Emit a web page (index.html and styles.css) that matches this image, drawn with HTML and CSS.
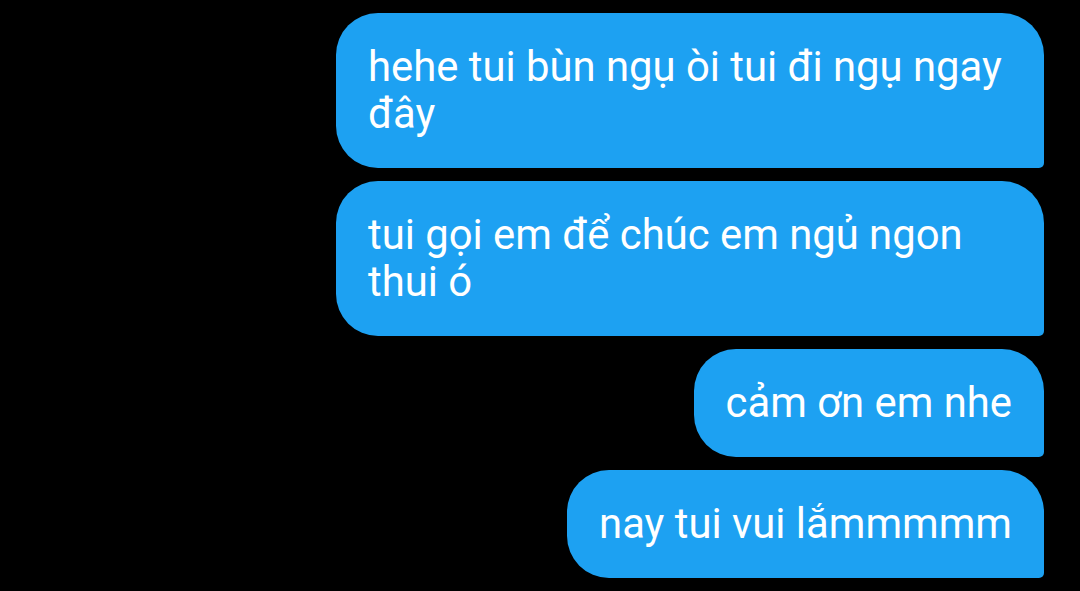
FILE: index.html
```html
<!DOCTYPE html>
<html lang="vi">
<head>
<meta charset="utf-8">
<link rel="stylesheet" href="styles.css">
</head>
<body>
<div class="thread">
  <div class="bubble">hehe tui bùn ngụ òi tui đi ngụ ngay đây</div>
  <div class="bubble">tui gọi em để chúc em ngủ ngon thui ó</div>
  <div class="bubble">cảm ơn em nhe</div>
  <div class="bubble">nay tui vui lắmmmmm</div>
</div>
</body>
</html>
```
FILE: styles.css
```css
html, body {
  margin: 0;
  padding: 0;
  background: #000;
}
body {
  width: 1080px;
  height: 591px;
  overflow: hidden;
  font-family: Roboto, "Noto Sans", sans-serif;
}
.thread {
  display: flex;
  flex-direction: column;
  align-items: flex-end;
  gap: 13px;
  padding: 13px 36px 0 0;
}
.bubble {
  box-sizing: border-box;
  max-width: 708px;
  padding: 30px 32px 31px;
  background: #1DA1F2;
  color: #fff;
  font-size: 41.8px;
  line-height: 47px;
  border-radius: 42px 42px 5px 42px;
}
```
